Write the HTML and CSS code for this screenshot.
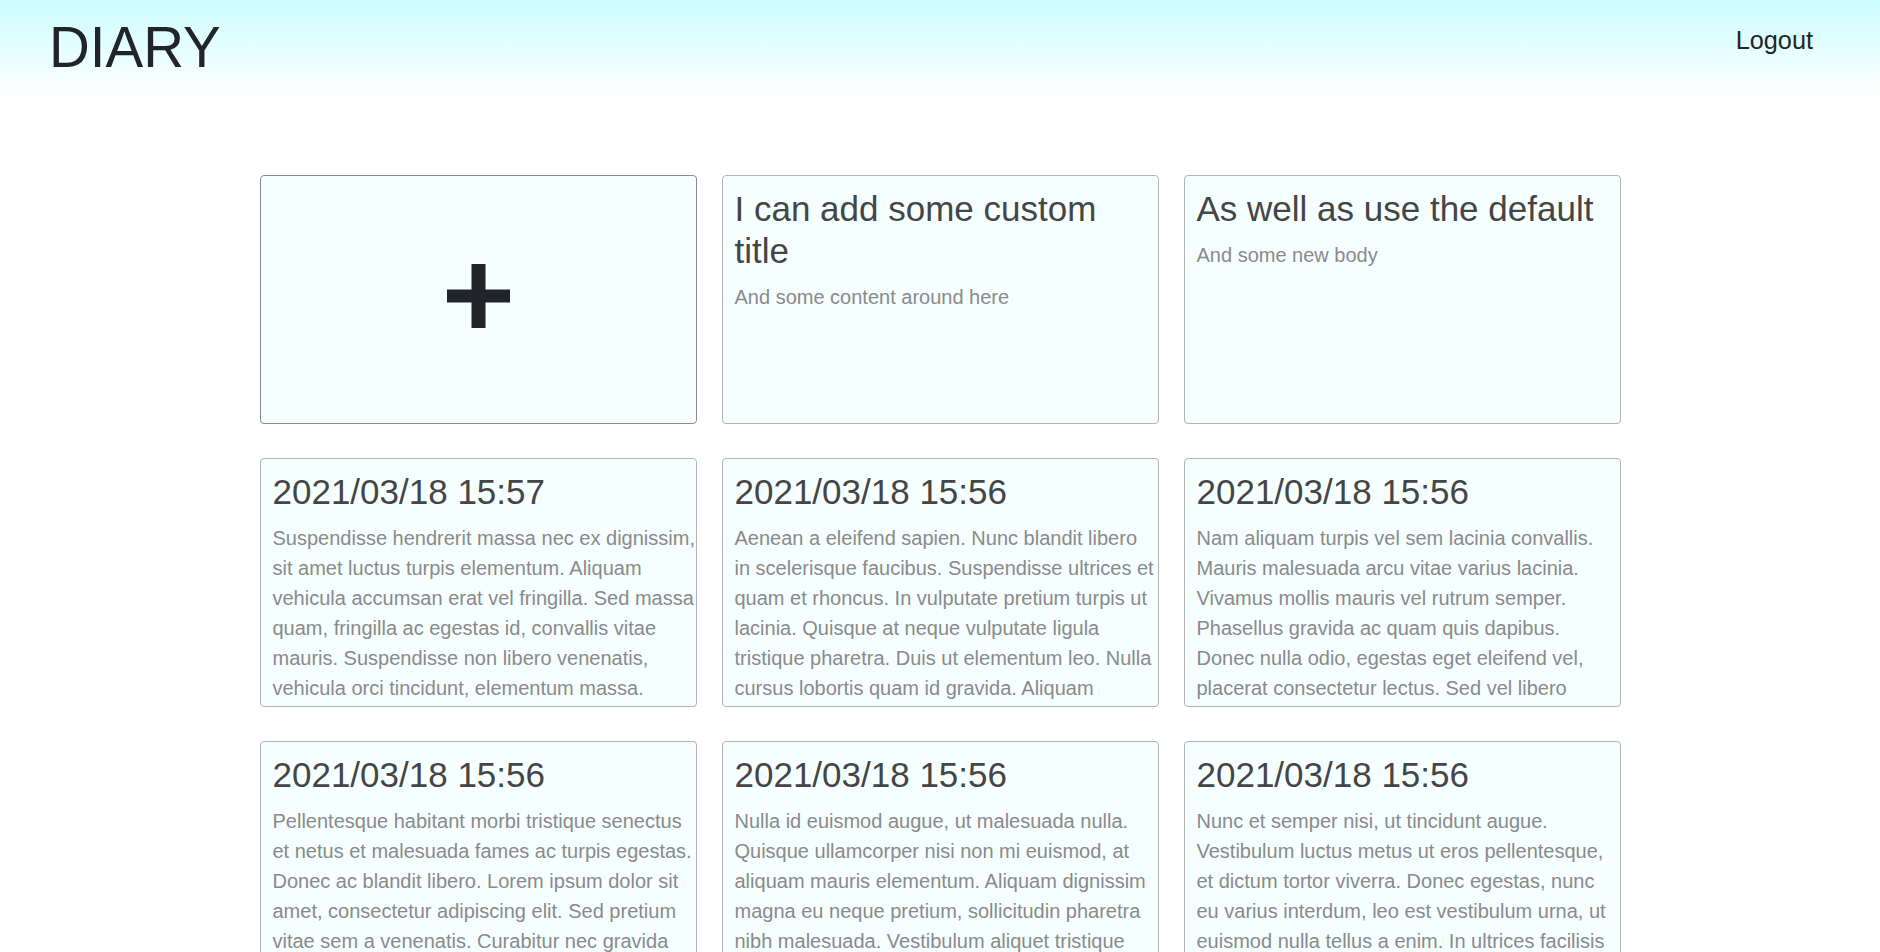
FILE: index.html
```html
<!DOCTYPE html>
<html lang="en">
<head>
<meta charset="utf-8">
<title>Diary</title>
<link rel="stylesheet" href="styles.css">
</head>
<body>
<header class="topbar">
  <h1 class="brand">DIARY</h1>
  <a class="logout" href="#">Logout</a>
</header>
<main class="board">
  <div class="grid">
    <button class="card card-add" type="button" aria-label="Add entry">
      <svg class="plus" width="63" height="64" viewBox="0 0 63 64" aria-hidden="true">
        <rect x="24.5" y="0" width="14" height="64" fill="#212529"/>
        <rect x="0" y="25.5" width="63" height="13" fill="#212529"/>
      </svg>
    </button>
    <article class="card">
      <h2 class="card-title">I can add some custom title</h2>
      <p class="card-body">And some content around here</p>
    </article>
    <article class="card">
      <h2 class="card-title">As well as use the default</h2>
      <p class="card-body">And some new body</p>
    </article>
    <article class="card">
      <h2 class="card-title">2021/03/18 15:57</h2>
      <p class="card-body">Suspendisse hendrerit massa nec ex dignissim, sit amet luctus turpis elementum. Aliquam vehicula accumsan erat vel fringilla. Sed massa quam, fringilla ac egestas id, convallis vitae mauris. Suspendisse non libero venenatis, vehicula orci tincidunt, elementum massa.</p>
    </article>
    <article class="card">
      <h2 class="card-title">2021/03/18 15:56</h2>
      <p class="card-body">Aenean a eleifend sapien. Nunc blandit libero in scelerisque faucibus. Suspendisse ultrices et quam et rhoncus. In vulputate pretium turpis ut lacinia. Quisque at neque vulputate ligula tristique pharetra. Duis ut elementum leo. Nulla cursus lobortis quam id gravida. Aliquam tincidunt convallis metus.</p>
    </article>
    <article class="card">
      <h2 class="card-title">2021/03/18 15:56</h2>
      <p class="card-body">Nam aliquam turpis vel sem lacinia convallis. Mauris malesuada arcu vitae varius lacinia. Vivamus mollis mauris vel rutrum semper. Phasellus gravida ac quam quis dapibus. Donec nulla odio, egestas eget eleifend vel, placerat consectetur lectus. Sed vel libero sollicitudin, ultrices nisl pretium.</p>
    </article>
    <article class="card">
      <h2 class="card-title">2021/03/18 15:56</h2>
      <p class="card-body">Pellentesque habitant morbi tristique senectus et netus et malesuada fames ac turpis egestas. Donec ac blandit libero. Lorem ipsum dolor sit amet, consectetur adipiscing elit. Sed pretium vitae sem a venenatis. Curabitur nec gravida ligula, vel tincidunt nunc.</p>
    </article>
    <article class="card">
      <h2 class="card-title">2021/03/18 15:56</h2>
      <p class="card-body">Nulla id euismod augue, ut malesuada nulla. Quisque ullamcorper nisi non mi euismod, at aliquam mauris elementum. Aliquam dignissim magna eu neque pretium, sollicitudin pharetra nibh malesuada. Vestibulum aliquet tristique lorem, in porta orci.</p>
    </article>
    <article class="card">
      <h2 class="card-title">2021/03/18 15:56</h2>
      <p class="card-body">Nunc et semper nisi, ut tincidunt augue. Vestibulum luctus metus ut eros pellentesque, et dictum tortor viverra. Donec egestas, nunc eu varius interdum, leo est vestibulum urna, ut euismod nulla tellus a enim. In ultrices facilisis dui, sed feugiat est.</p>
    </article>
  </div>
</main>
</body>
</html>
```
FILE: styles.css
```css
* {
  box-sizing: border-box;
}

html, body {
  margin: 0;
  padding: 0;
}

body {
  font-family: "Liberation Sans", Arial, sans-serif;
  color: #212529;
  background: #ffffff;
}

.topbar {
  display: flex;
  justify-content: space-between;
  align-items: flex-start;
  height: 100px;
  padding: 14px 67px 0 49px;
  background: linear-gradient(to bottom, #cbfcff 0%, #e6feff 50%, #ffffff 100%);
}

.brand {
  margin: 0;
  font-size: 56.5px;
  font-weight: 400;
  line-height: 1.2;
  color: #212529;
}

.logout {
  margin-top: 10.5px;
  font-size: 25.3px;
  line-height: 1.2;
  color: #212529;
  text-decoration: none;
}

.board {
  padding-top: 75px;
}

.grid {
  width: 1361px;
  margin: 0 auto;
  display: grid;
  grid-template-columns: repeat(3, 1fr);
  column-gap: 25px;
  row-gap: 34px;
}

.card {
  height: 249px;
  overflow: hidden;
  padding: 12px 0 0 12px;
  background: #f5ffff;
  border: 1px solid #b4b4b4;
  border-radius: 4px;
}

.card-add {
  display: flex;
  align-items: center;
  justify-content: center;
  padding: 0 0 7px 0;
  border-color: #8a8a8a;
  font: inherit;
  cursor: pointer;
}

.plus {
  display: block;
}

.card-title {
  margin: 0 0 10px 0;
  font-size: 35px;
  font-weight: 400;
  line-height: 1.2;
  color: #454545;
}

.card-body {
  margin: 0;
  font-size: 20px;
  line-height: 1.5;
  color: #8a8a8a;
}
```
